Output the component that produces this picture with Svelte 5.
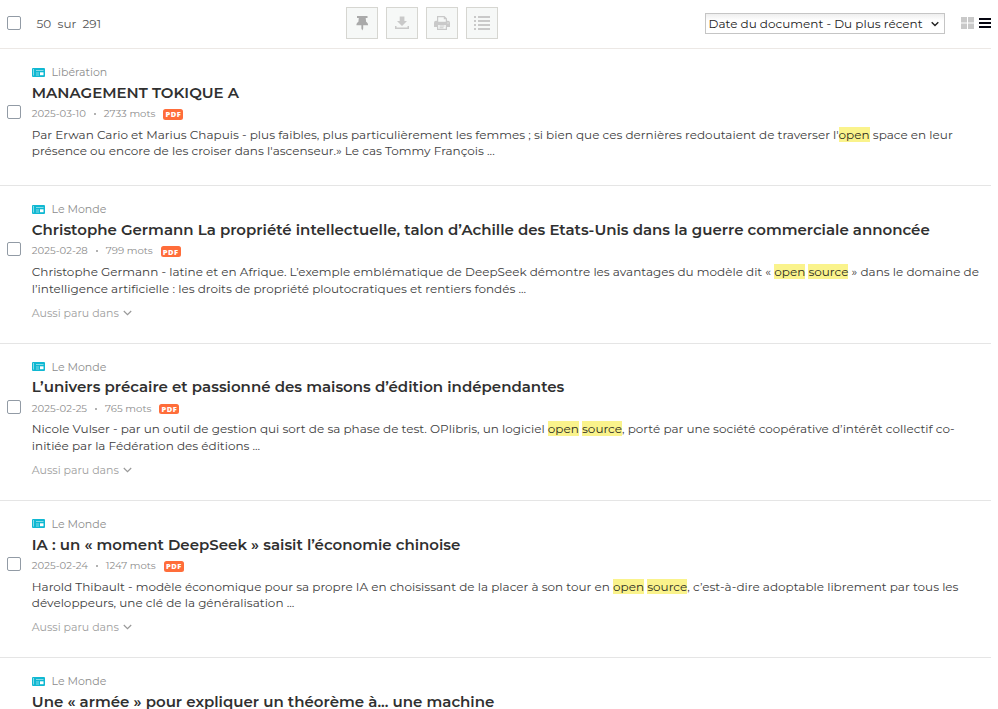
<script>
  const articles = [
    {
      source: 'Libération', title: 'MANAGEMENT TOKIQUE A', date: '2025-03-10', words: '2733 mots',
      lines: [
        [["Par Erwan Cario et Marius Chapuis - plus faibles, plus particulièrement les femmes ; si bien que ces dernières redoutaient de traverser l'"], ['open', true], [' space en leur']],
        [["présence ou encore de les croiser dans l'ascenseur.» Le cas Tommy François ..."]]
      ]
    },
    {
      source: 'Le Monde', title: 'Christophe Germann La propriété intellectuelle, talon d’Achille des Etats-Unis dans la guerre commerciale annoncée',
      date: '2025-02-28', words: '799 mots', more: true,
      lines: [
        [['Christophe Germann - latine et en Afrique. L’exemple emblématique de DeepSeek démontre les avantages du modèle dit « '], ['open', true], [' '], ['source', true], [' » dans le domaine de']],
        [['l’intelligence artificielle : les droits de propriété ploutocratiques et rentiers fondés ...']]
      ]
    },
    {
      source: 'Le Monde', title: 'L’univers précaire et passionné des maisons d’édition indépendantes',
      date: '2025-02-25', words: '765 mots', more: true,
      lines: [
        [['Nicole Vulser - par un outil de gestion qui sort de sa phase de test. OPlibris, un logiciel '], ['open', true], [' '], ['source', true], [', porté par une société coopérative d’intérêt collectif co-']],
        [['initiée par la Fédération des éditions ...']]
      ]
    },
    {
      source: 'Le Monde', title: 'IA : un « moment DeepSeek » saisit l’économie chinoise',
      date: '2025-02-24', words: '1247 mots', more: true,
      lines: [
        [['Harold Thibault - modèle économique pour sa propre IA en choisissant de la placer à son tour en '], ['open', true], [' '], ['source', true], [', c’est-à-dire adoptable librement par tous les']],
        [['développeurs, une clé de la généralisation ...']]
      ]
    },
    { source: 'Le Monde', title: 'Une « armée » pour expliquer un théorème à... une machine', lines: [] }
  ];
</script>

<div class="page">
  <header>
    <span class="box"></span>
    <span class="count">50&nbsp; sur&nbsp; 291</span>
    <div class="tools">
      <button aria-label="Épingler">
        <svg width="30" height="30" viewBox="0 0 30 30"><path fill="#aaa" d="M10 8h10.500v2H18.700l.4 3.800c1.400.8 2 2 2 3.500H16.200v3.200l-.9 2-.9-2v-3.200H9.400c0-1.500.6-2.700 2-3.500l.4-3.800H10z" /></svg>
      </button>
      <button aria-label="Télécharger">
        <svg width="30" height="30" viewBox="0 0 30 30"><path fill="#c9c9c9" d="M12.700 8.500h4.700V13H20l-5 5-5-5h2.700zM8 18h1.500v1.500h11V18H22v3H8z" /></svg>
      </button>
      <button aria-label="Imprimer">
        <svg width="30" height="30" viewBox="0 0 30 30"><path fill="#c9c9c9" fill-rule="evenodd" d="M10 8h7.500l2.500 2.500v2.200h1q2 0 2 2V19h-3v3h-10v-3H7v-4.300q0-2 2-2h1zM11.200 9.200v4.500h7.600v-2.500h-2V9.200zM11.200 17v3.800h7.600V17zM20.500 14.500v1h1v-1z" /><path stroke="#c9c9c9" d="M12.500 18h5M12.500 19.800h4" /></svg>
      </button>
      <button aria-label="Liste">
        <svg width="30" height="30" viewBox="0 0 30 30"><path fill="#c9c9c9" d="M7 8h2v2H7zM11 8h12v2H11zM7 12h2v2H7zM11 12h12v2H11zM7 16h2v2H7zM11 16h12v2H11zM7 20h2v2H7zM11 20h12v2H11z" /></svg>
      </button>
    </div>
    <div class="select">
      <span>Date du document - Du plus récent</span>
      <svg width="8" height="6" viewBox="0 0 8 6"><path d="M.7 1.200L4 4.600l3.300-3.400" fill="none" stroke="#222" stroke-width="1.400" /></svg>
    </div>
    <svg class="grid" width="13" height="12" viewBox="0 0 13 12"><path fill="#c9c9c9" d="M0 0h6v5.500H0zM7 0h6v5.500H7zM0 6.500h6V12H0zM7 6.500h6V12H7z" /></svg>
    <svg class="burger" width="12" height="10" viewBox="0 0 12 10"><path fill="#050510" d="M0 0h12v2H0zM0 4h12v2H0zM0 8h12v2H0z" /></svg>
  </header>

  {#each articles as a}
    <article class:short={!a.more && a.date}>
      <div class="pick"><span class="box"></span></div>
      <div class="body">
        <div class="source">
          <svg width="13" height="9" viewBox="0 0 13 9"><rect width="13" height="9" rx="1" fill="#10b8d2" /><path d="M1.500 1v6.500M4 2.500h7.500M4 5h3M4 7h3" stroke="#a5e4ee" stroke-width=".8" /><path fill="#fff" d="M8 4.300h3.500v2.900H8z" /></svg>
          <span>{a.source}</span>
        </div>
        <h2>{a.title}</h2>
        {#if a.date}
          <div class="meta">
            <span>{a.date}</span><i></i><span>{a.words}</span><b>PDF</b>
          </div>
        {/if}
        <div class="extract">
          {#each a.lines as line}
            <div class="line">{#each line as [text, hit]}<span class:hit>{text}</span>{/each}</div>
          {/each}
        </div>
        {#if a.more}
          <div class="more">
            <span>Aussi paru dans</span>
            <svg width="9" height="6" viewBox="0 0 9 6"><path d="M.8 1l3.700 3.700L8.200 1" fill="none" stroke="#999" stroke-width="1.200" /></svg>
          </div>
        {/if}
      </div>
    </article>
  {/each}
</div>

<style>
  :global(body) { margin: 0; background: #fff; overflow: hidden; }
  .page { width: 991px; height: 709px; overflow: hidden; font-family: Montserrat, Inter, "Open Sans", sans-serif; font-size: 12px; color: #404040; }
  span, h2 { white-space: pre; }
  header { display: flex; height: 48px; border-bottom: 1px solid #ece8e5; box-sizing: content-box; align-items: flex-start; }
  .box { display: block; flex: none; width: 14px; height: 14px; box-sizing: border-box; border: 1px solid #929ba5; border-radius: 2px; background: #fff; }
  header .box { margin: 16px 0 0 7px; }
  .count { width: 309px; padding-left: 15.500px; box-sizing: border-box; line-height: 16px; margin-top: 16px; color: #555; flex: none; margin-right: 16px; }
  .tools { display: flex; gap: 8px; margin-top: 7px; }
  button { width: 32px; height: 32px; padding: 0; border: 1px solid #d6d6d1; background: #f6f8f7; }
  button svg { display: block; }
  .select { display: flex; align-items: center; justify-content: space-between; box-sizing: border-box; width: 240px; height: 21px; margin: 13px 0 0 207px; padding: 0 5px 0 2.500px; border: 1px solid #c5c5c5; background: linear-gradient(#eee, #fff 35%); color: #222; flex: none; }
  .grid { margin: 17px 0 0 16px; flex: none; }
  .burger { margin: 18px 0 0 5px; flex: none; }
  article { display: flex; height: 157.350px; box-sizing: border-box; border-bottom: 1px solid #e5e5e5; }
  article.short { height: 137.250px; }
  .pick { width: 31.800px; padding: 56px 0 0 7px; box-sizing: border-box; flex: none; }
  .body { padding-top: 14.500px; }
  .source { display: flex; align-items: center; gap: 6.700px; height: 17px; font-size: 11px; color: #8d8d8d; }
  h2 { margin: 2.200px 0 0; font-size: 15px; line-height: 20px; height: 20px; font-weight: 600; color: #303030; }
  .meta { display: flex; align-items: center; height: 18px; margin-top: 1.800px; font-size: 10.100px; color: #8d8d8d; }
  .meta i { width: 2px; height: 2px; margin: 1px 8px 0; border-radius: 1px; background: #999; }
  .meta b { display: flex; align-items: center; justify-content: center; width: 20px; height: 10.500px; margin: 2px 0 0 8px; border-radius: 2.500px; background: #ff6d3a; color: #fff; font-family: "Open Sans", sans-serif; font-size: 7.500px; font-weight: 800; letter-spacing: .5px; line-height: 10px; }
  .extract { margin-top: 4.200px; }
  .line { height: 16.600px; line-height: 16.600px; }
  .hit { background: #faf38c; color: #2b2b20; }
  .more { display: flex; align-items: center; gap: 4px; height: 16px; margin-top: 7.500px; font-size: 11px; color: #a0a0a0; }
</style>
